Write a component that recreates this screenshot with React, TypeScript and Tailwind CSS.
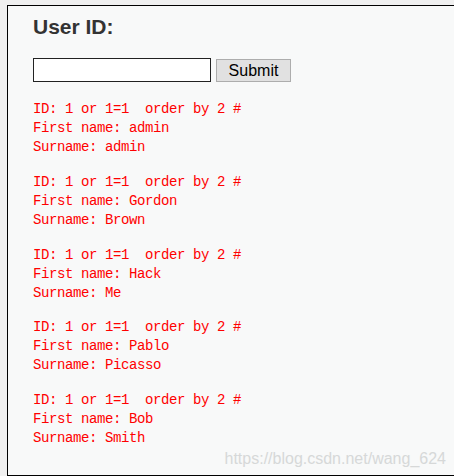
const RESULTS = [
  { first: "admin", last: "admin" },
  { first: "Gordon", last: "Brown" },
  { first: "Hack", last: "Me" },
  { first: "Pablo", last: "Picasso" },
  { first: "Bob", last: "Smith" },
];

export default function App() {
  return (
    <div className="h-[476px] overflow-hidden bg-[#f0f0f0] pl-[7px] pt-[5px] font-['Liberation_Sans',Arial,sans-serif]">
      <div className="relative h-[471px] border border-r-0 border-black bg-[#f8f9f9] pl-[25px]">
        <h1 className="mt-[9px] text-[21px] font-bold leading-[24px] text-[#333]">
          User ID:
        </h1>
        <form
          className="mt-[19px] flex items-start gap-[5px]"
          onSubmit={(e) => e.preventDefault()}
        >
          <input
            type="text"
            className="h-[24px] w-[178px] border border-[#222] bg-white px-1 text-[14px] outline-none"
          />
          <button
            type="submit"
            className="mt-px h-[23px] w-[75px] border border-[#adadad] bg-[#e1e1e1] text-[16px] leading-[21px] text-black"
          >
            Submit
          </button>
        </form>

        <div className="mt-[18px] font-['Liberation_Mono','Courier_New',monospace] text-[14px] leading-[19px] tracking-[-0.4px] text-[#ff0000]">
          {RESULTS.map((r, i) => (
            <div key={i} className="mb-[15.75px] whitespace-pre">
              <div>ID: 1 or 1=1  order by 2 #</div>
              <div>First name: {r.first}</div>
              <div>Surname: {r.last}</div>
            </div>
          ))}
        </div>

        <div className="absolute bottom-[7px] right-[8px] text-[16px] leading-[18px] text-[#d6d8d8]">
          https://blog.csdn.net/wang_624
        </div>
      </div>
    </div>
  );
}
